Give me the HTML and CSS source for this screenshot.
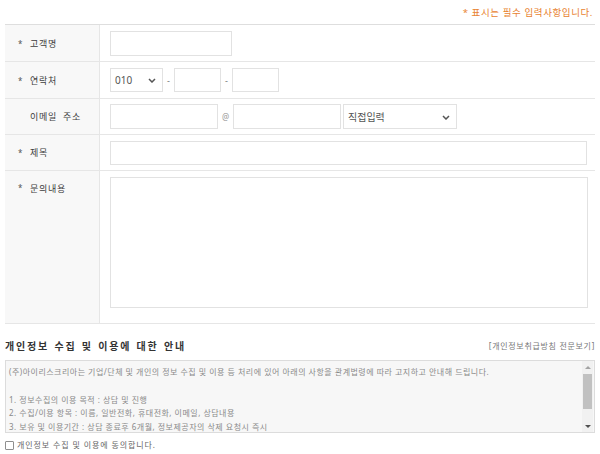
FILE: index.html
```html
<!DOCTYPE html>
<html lang="ko">
<head>
<meta charset="utf-8">
<title>문의하기</title>
<link rel="stylesheet" href="styles.css">
</head>
<body>
<div class="page">
  <p class="req-note">* 표시는 필수 입력사항입니다.</p>
  <div class="form-table">
    <div class="row">
      <div class="label"><span class="star">*</span>고객명</div>
      <div class="field"><input class="inp w-name" type="text"></div>
    </div>
    <div class="row">
      <div class="label"><span class="star">*</span>연락처</div>
      <div class="field">
        <span class="sel-wrap w-tel">
          <select class="sel"><option>010</option></select>
          <svg class="chev" width="8" height="5" viewBox="0 0 8 5"><polyline points="1,1 4,4 7,1" fill="none" stroke="#555" stroke-width="1.5"/></svg>
        </span>
        <span class="sep">-</span>
        <input class="inp w-tel2" type="text">
        <span class="sep">-</span>
        <input class="inp w-tel2" type="text">
      </div>
    </div>
    <div class="row r-short">
      <div class="label">이메일 주소</div>
      <div class="field">
        <input class="inp w-mail" type="text">
        <span class="at">@</span>
        <input class="inp w-mail" type="text">
        <span class="sel-wrap w-domain">
          <select class="sel"><option>직접입력</option></select>
          <svg class="chev" width="8" height="5" viewBox="0 0 8 5"><polyline points="1,1 4,4 7,1" fill="none" stroke="#555" stroke-width="1.5"/></svg>
        </span>
      </div>
    </div>
    <div class="row r-short">
      <div class="label"><span class="star">*</span>제목</div>
      <div class="field"><input class="inp w-full" type="text"></div>
    </div>
    <div class="row r-tall">
      <div class="label label-top"><span class="star">*</span>문의내용</div>
      <div class="field field-top"><textarea class="ta"></textarea></div>
    </div>
  </div>

  <div class="privacy-head">
    <h3 class="privacy-title">개인정보 수집 및 이용에 대한 안내</h3>
    <a class="privacy-link">[개인정보취급방침 전문보기]</a>
  </div>
  <div class="privacy-box">
    <div class="privacy-text">
      <p>(주)아이리스크리아는 기업/단체 및 개인의 정보 수집 및 이용 등 처리에 있어 아래의 사항을 관계법령에 따라 고지하고 안내해 드립니다.</p>
      <p>&nbsp;</p>
      <p>1. 정보수집의 이용 목적 : 상담 및 진행</p>
      <p>2. 수집/이용 항목 : 이름, 일반전화, 휴대전화, 이메일, 상담내용</p>
      <p>3. 보유 및 이용기간 : 상담 종료후 6개월, 정보제공자의 삭제 요청시 즉시</p>
    </div>
    <div class="scrollbar">
      <span class="sb-btn"><span class="tri-up"></span></span>
      <span class="sb-track"><span class="sb-thumb"></span></span>
      <span class="sb-btn"><span class="tri-down"></span></span>
    </div>
  </div>
  <div class="agree"><span class="checkbox"></span><span class="agree-text">개인정보 수집 및 이용에 동의합니다.</span></div>
</div>
</body>
</html>
```

FILE: styles.css
```css
* { box-sizing: border-box; }
html, body { margin: 0; padding: 0; background: #fff; }
body {
  font-family: "Noto Sans", "Noto Sans CJK KR", sans-serif;
  color: #444;
}
.page { width: 600px; padding: 0 5px; }

.req-note {
  margin: 0;
  height: 24px;
  line-height: 26px;
  text-align: right;
  padding-right: 2px;
  font-size: 9.5px;
  letter-spacing: 0.6px;
  color: #e8822f;
}

.form-table { border-top: 1px solid #dedede; }
.row {
  display: grid;
  grid-template-columns: 95px 1fr;
  height: 37px;
  border-bottom: 1px solid #e6e6e6;
}
.row.r-short { height: 36px; }
.row.r-tall { height: 153px; }

.label {
  background: #f8f8f8;
  border-right: 1px solid #e6e6e6;
  display: flex;
  align-items: center;
  padding-left: 25px;
  font-size: 9px;
  letter-spacing: 0.7px;
  word-spacing: 3px;
  color: #3d3d3d;
}
.label-top { align-items: flex-start; padding-top: 11px; }
.star {
  width: 12px;
  margin-left: -12px;
  font-size: 8px;
  color: #555;
}

.field {
  display: flex;
  align-items: center;
  padding-left: 10px;
}
.field-top { align-items: flex-start; padding-top: 6px; }

.inp {
  height: 25px;
  border: 1px solid #e2e2e2;
  background: #fff;
  margin: 0;
  padding: 0 4px;
  outline: none;
}
.w-name { width: 122px; }
.w-tel2 { width: 47px; height: 24px; }
.w-mail { width: 108px; }
.w-full { width: 477px; height: 24px; }

.sel-wrap { position: relative; display: inline-flex; height: 24px; }
.w-tel { width: 53px; }
.w-domain { width: 114px; margin-left: 2px; height: 25px; }
.sel {
  -webkit-appearance: none;
  appearance: none;
  width: 100%;
  height: 100%;
  border: 1px solid #e2e2e2;
  background: #fff;
  margin: 0;
  padding: 0 0 0 4px;
  font-family: "Noto Sans", "Noto Sans CJK KR", sans-serif;
  font-size: 10px;
  color: #555;
  outline: none;
}
.chev { position: absolute; right: 7px; top: 50%; margin-top: -2px; pointer-events: none; }

.sep {
  width: 11px;
  text-align: center;
  font-size: 9px;
  color: #777;
}
.at {
  width: 15px;
  text-align: center;
  font-size: 8px;
  color: #999;
}

.ta {
  width: 478px;
  height: 131px;
  border: 1px solid #e2e2e2;
  margin: 0;
  resize: none;
  outline: none;
}

.privacy-head {
  display: flex;
  justify-content: space-between;
  align-items: center;
  margin-top: 14px;
  height: 14px;
}
.privacy-title {
  margin: 0;
  font-size: 10px;
  font-weight: bold;
  letter-spacing: 1.8px;
  word-spacing: 1px;
  color: #333;
}
.privacy-link {
  font-size: 8px;
  letter-spacing: 0.7px;
  color: #777;
}

.privacy-box {
  display: flex;
  margin-top: 8px;
  height: 73px;
  border: 1px solid #dcdcdc;
  background: #f7f7f7;
}
.privacy-text {
  flex: 1;
  overflow: hidden;
  padding: 4px 0 0 3px;
  font-size: 8px;
  line-height: 13.8px;
  letter-spacing: 0.5px;
  color: #8a8a8a;
}
.privacy-text p { margin: 0; white-space: nowrap; }

.scrollbar {
  width: 11px;
  margin-right: 1px;
  display: flex;
  flex-direction: column;
  background: #f1f1f1;
}
.sb-btn {
  height: 12px;
  display: flex;
  align-items: center;
  justify-content: center;
}
.sb-track {
  flex: 1;
  display: flex;
  flex-direction: column;
  padding: 1px 1px 0;
}
.sb-thumb { height: 35px; background: #c1c1c1; }
.tri-up {
  width: 0; height: 0;
  border-left: 3px solid transparent;
  border-right: 3px solid transparent;
  border-bottom: 3px solid #a3a3a3;
}
.tri-down {
  width: 0; height: 0;
  border-left: 3px solid transparent;
  border-right: 3px solid transparent;
  border-top: 3px solid #505050;
}

.agree {
  display: flex;
  align-items: center;
  margin-top: 5px;
}
.agree-text {
  font-size: 8px;
  line-height: 14px;
  letter-spacing: 0.9px;
  color: #666;
}
.checkbox {
  flex: none;
  width: 9px;
  height: 9px;
  border: 1px solid #8f8f8f;
  border-radius: 1px;
  background: #fff;
  margin-right: 3px;
}
```
